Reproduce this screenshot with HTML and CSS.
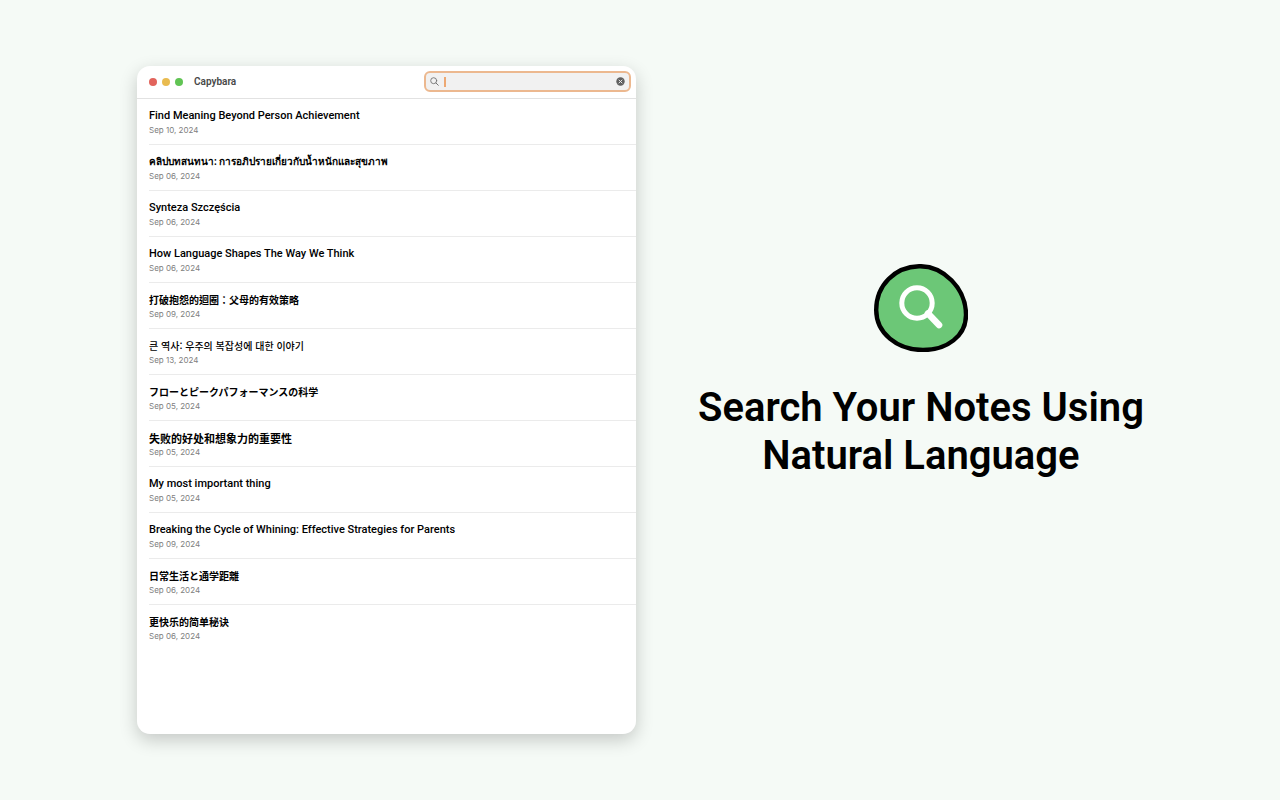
FILE: index.html
```html
<!DOCTYPE html>
<html lang="en">
<head>
    <meta charset="UTF-8">
    <meta name="viewport" content="width=device-width, initial-scale=1.0">
    <title>Capybara</title>
    <link rel="stylesheet" href="styles.css">
</head>
<body>
    <main class="page">
        <section class="window">
            <header class="titlebar">
                <div class="lights">
                    <span class="light red"></span>
                    <span class="light yellow"></span>
                    <span class="light green"></span>
                </div>
                <h2 class="app-name">Capybara</h2>
                <form class="search">
                    <svg class="search-icon" viewBox="0 0 9 9" fill="none" stroke="#747474" stroke-linecap="round">
                        <circle cx="3.7" cy="3.7" r="3" stroke-width="0.9"/>
                        <path d="M6 6l2.3 2.3" stroke-width="1"/>
                    </svg>
                    <span class="caret"></span>
                    <input class="search-input" type="text" aria-label="Search notes">
                    <button class="clear-btn" type="reset" aria-label="Clear search">
                        <svg viewBox="0 0 9 9">
                            <circle cx="4.5" cy="4.5" r="4.2" fill="#606060"/>
                            <path d="M3 3l3 3M6 3l-3 3" stroke="#f1f1f1" stroke-width="0.9" stroke-linecap="round"/>
                        </svg>
                    </button>
                </form>
            </header>

            <ul class="notes">
                <li class="note">
                    <h3>Find Meaning Beyond Person Achievement</h3>
                    <time datetime="2024-09-10">Sep 10, 2024</time>
                </li>
                <li class="note">
                    <h3 lang="th">คลิปบทสนทนา: การอภิปรายเกี่ยวกับน้ำหนักและสุขภาพ</h3>
                    <time datetime="2024-09-06">Sep 06, 2024</time>
                </li>
                <li class="note">
                    <h3 lang="pl">Synteza Szczęścia</h3>
                    <time datetime="2024-09-06">Sep 06, 2024</time>
                </li>
                <li class="note">
                    <h3>How Language Shapes The Way We Think</h3>
                    <time datetime="2024-09-06">Sep 06, 2024</time>
                </li>
                <li class="note">
                    <h3 lang="zh-TW">打破抱怨的迴圈：父母的有效策略</h3>
                    <time datetime="2024-09-09">Sep 09, 2024</time>
                </li>
                <li class="note">
                    <h3 lang="ko">큰 역사: 우주의 복잡성에 대한 이야기</h3>
                    <time datetime="2024-09-13">Sep 13, 2024</time>
                </li>
                <li class="note">
                    <h3 lang="ja">フローとピークパフォーマンスの科学</h3>
                    <time datetime="2024-09-05">Sep 05, 2024</time>
                </li>
                <li class="note">
                    <h3 lang="zh-CN" class="wide">失败的好处和想象力的重要性</h3>
                    <time datetime="2024-09-05">Sep 05, 2024</time>
                </li>
                <li class="note">
                    <h3>My most important thing</h3>
                    <time datetime="2024-09-05">Sep 05, 2024</time>
                </li>
                <li class="note">
                    <h3>Breaking the Cycle of Whining: Effective Strategies for Parents</h3>
                    <time datetime="2024-09-09">Sep 09, 2024</time>
                </li>
                <li class="note">
                    <h3 lang="ja">日常生活と通学距離</h3>
                    <time datetime="2024-09-06">Sep 06, 2024</time>
                </li>
                <li class="note">
                    <h3 lang="zh-CN">更快乐的简单秘诀</h3>
                    <time datetime="2024-09-06">Sep 06, 2024</time>
                </li>
            </ul>
        </section>

        <section class="hero">
            <svg class="badge" viewBox="0 0 94 88" fill="none">
                <path d="M45 2.2C69 1.6 92 24 92 51C92 72 73 86 49 86C23 86 2.2 69 2.2 46C2.2 21 21 2.8 45 2.2Z" fill="#6cc777" stroke="#000" stroke-width="4.4"/>
                <circle cx="43" cy="39" r="15.2" stroke="#fff" stroke-width="5"/>
                <path d="M54 49.5L65 61" stroke="#fff" stroke-width="6.6" stroke-linecap="round"/>
            </svg>
            <h1>Search Your Notes Using<br>Natural Language</h1>
        </section>
    </main>
</body>
</html>
```
FILE: styles.css
```css
* {
    margin: 0;
    padding: 0;
    box-sizing: border-box;
}

body {
    font-family: Inter, "Noto Sans CJK SC", "Noto Sans", sans-serif;
    background: #f5faf6;
    color: #000;
}

.page {
    display: grid;
    grid-template-columns: 7fr 8fr;
    min-height: 100vh;
    padding: 66px 74px 66px 137px;
}

.window {
    background: #fff;
    border-radius: 13px;
    box-shadow: 0 6px 18px rgba(0, 0, 0, 0.2);
    overflow: hidden;
}

.titlebar {
    display: flex;
    align-items: center;
    height: 33px;
    padding: 0 5px 1px 12px;
    border-bottom: 1px solid #e2e2e2;
}

.lights {
    display: flex;
    gap: 5px;
    margin-right: 11px;
}

.light {
    width: 8px;
    height: 8px;
    border-radius: 50%;
}

.red {
    background: #e2645c;
}

.yellow {
    background: #e9bb50;
}

.green {
    background: #61c454;
}

.app-name {
    font-family: Roboto, sans-serif;
    font-size: 10px;
    font-weight: 600;
    color: #484848;
}

.search {
    display: flex;
    align-items: center;
    width: 207px;
    height: 21px;
    margin-left: auto;
    padding: 0 4px;
    background: #f1f1f1;
    border: 2px solid #ecb88f;
    border-radius: 6px;
}

.search-icon {
    width: 9px;
    height: 9px;
    margin-right: 5px;
}

.caret {
    width: 2px;
    height: 10px;
    background: #eda873;
}

.search-input {
    flex: 1;
    min-width: 0;
    border: none;
    outline: none;
    background: transparent;
    font: 10px Inter, sans-serif;
    caret-color: #ea9450;
}

.clear-btn {
    display: flex;
    width: 9px;
    height: 9px;
    border: none;
    background: none;
    cursor: pointer;
}

.notes {
    list-style: none;
    padding-left: 12px;
}

.note {
    height: 46px;
    padding-top: 9px;
    border-bottom: 1px solid #ebebeb;
}

.note:last-child {
    border-bottom: none;
}

.note h3 {
    font-family: Roboto, sans-serif;
    font-size: 11px;
    line-height: 16px;
    font-weight: 500;
}

.note time {
    display: block;
    font-size: 8px;
    line-height: 12px;
    color: #808080;
}

.note h3[lang="th"] {
    font-family: "Noto Sans", sans-serif;
    font-size: 10px;
    line-height: 15px;
    padding-bottom: 1px;
    font-weight: 600;
}

.note h3[lang="zh-TW"] {
    font-family: "Noto Sans CJK TC", sans-serif;
    font-size: 10px;
    font-weight: 600;
}

.note h3[lang="ko"] {
    font-family: "Noto Sans CJK KR", sans-serif;
    font-size: 10px;
}

.note h3[lang="ja"] {
    font-family: "Noto Sans CJK JP", sans-serif;
    font-size: 10px;
    font-weight: 600;
}

.note h3[lang="zh-CN"] {
    font-family: "Noto Sans CJK SC", sans-serif;
    font-size: 10px;
    font-weight: 600;
}

.note h3.wide {
    font-size: 11px;
}

.hero {
    display: flex;
    flex-direction: column;
    align-items: center;
    justify-content: center;
    padding-bottom: 56px;
}

.badge {
    width: 94px;
    height: 88px;
    margin-bottom: 32px;
}

.hero h1 {
    font-family: Roboto, sans-serif;
    font-size: 40px;
    line-height: 48px;
    font-weight: 600;
    text-align: center;
}
```
